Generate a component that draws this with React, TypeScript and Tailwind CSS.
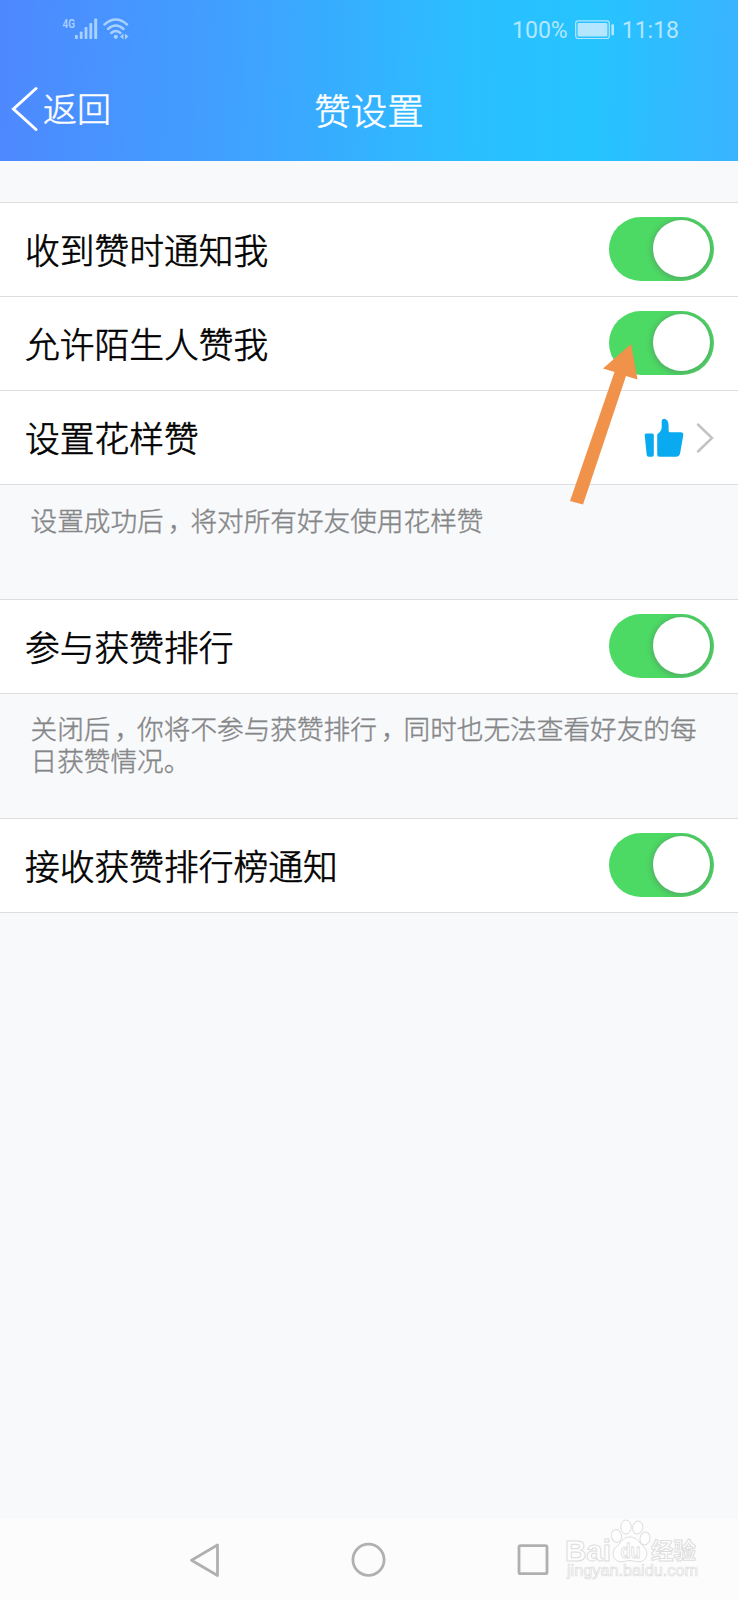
import type { ReactNode } from "react";

function StatusBar() {
  return (
    <div className="flex h-[60px] items-center justify-between pr-[59px] pl-[62px] text-[#b4e6ff]">
      <svg width="70" height="24" viewBox="0 0 70 24" className="mt-[-2px] text-[#a9d1ff]" fill="currentColor">
        <text x="0.5" y="10.5" fontSize="12.5" fontWeight="600" fontFamily="Roboto, sans-serif" textLength="12.5" lengthAdjust="spacingAndGlyphs">
          4G
        </text>
        <rect x="13" y="18" width="2.8" height="4" rx="0.8" />
        <rect x="17.8" y="14.5" width="2.8" height="7.5" rx="0.8" />
        <rect x="22.6" y="10" width="2.8" height="12" rx="0.8" />
        <rect x="27.4" y="6" width="2.8" height="16" rx="0.8" />
        <rect x="32.2" y="1.5" width="3" height="20.5" rx="0.8" />
        <g fill="none" stroke="currentColor" strokeWidth="2.4" strokeLinecap="round">
          <path d="M42.5 7.5Q53.8-2.3 65 7.5" />
          <path d="M46 12Q53.8 5.2 61.5 12" />
          <path d="M49.2 16Q53.8 11.8 58.4 16" />
        </g>
        <circle cx="53.8" cy="19.8" r="2.1" />
        <path d="M61.5 16.5v6l-3.5-3zM63 16.5v6l3.5-3z" />
      </svg>
      <div className="flex items-center font-[Roboto,sans-serif] text-[23px] leading-none">
        <span>100%</span>
        <svg width="40" height="20" viewBox="0 0 40 20" className="mr-[7px] ml-[7px]">
          <rect x="0.7" y="0.9" width="33.6" height="17.6" rx="2.5" fill="none" stroke="currentColor" strokeWidth="1.2" />
          <rect x="2.6" y="2.9" width="29.8" height="13.6" rx="1" fill="currentColor" />
          <rect x="36.4" y="4.2" width="2.6" height="11" rx="1" fill="currentColor" />
        </svg>
        <span>11:18</span>
      </div>
    </div>
  );
}

function Header() {
  return (
    <header className="h-[161px] bg-[linear-gradient(92deg,#4e88ff_0%,#3fa2ff_33%,#2abfff_64%,#25c4ff_80%,#3ab3ff_100%)]">
      <StatusBar />
      <div className="grid h-[100px] grid-cols-[1fr_auto_1fr] items-center px-[11px] text-white">
        <div className="flex items-center gap-[5px] text-[34px] leading-none font-light [-webkit-text-stroke:0.5px]">
          <svg width="27" height="46" viewBox="0 0 27 46" fill="none" stroke="currentColor" strokeWidth="3" strokeLinecap="round" className="mt-[-2px]">
            <path d="M25 2.5 2.5 23 25 43.5" />
          </svg>
          <span className="mt-[-4px]">返回</span>
        </div>
        <h1 className="text-[36.5px] leading-none font-light [-webkit-text-stroke:0.5px]">赞设置</h1>
      </div>
    </header>
  );
}

function Switch() {
  return (
    <span className="mt-[-2px] flex h-[64px] w-[105px] items-center justify-end overflow-hidden rounded-full bg-[#4cd964] pr-[4px]">
      <span className="size-[57px] rounded-full bg-white shadow-[0_1px_5px_2px_rgba(90,120,100,0.4)]" />
    </span>
  );
}

function Row({ label, children }: { label: string; children: ReactNode }) {
  return (
    <div className="flex h-[94px] items-center justify-between border-t border-[#dcdddf] bg-white pr-[24px] pl-[25px]">
      <span className="mt-[-1px] text-[34.75px] leading-none font-light text-black [-webkit-text-stroke:0.6px]">{label}</span>
      {children}
    </div>
  );
}

function Note({ children }: { children: ReactNode }) {
  return (
    <p className="pl-[30.5px] font-['Liberation_Sans','Noto_Sans_CJK_SC',sans-serif] text-[26.65px] leading-[32px] font-light whitespace-nowrap text-[#858688] [-webkit-text-stroke:0.4px]">
      {children}
    </p>
  );
}

function Comma() {
  return <span className="ml-[4px] tracking-[-4px]">，</span>;
}

function Thumb() {
  return (
    <svg width="40" height="40" viewBox="0 0 40 40" fill="#0aaaf0">
      <path d="M2 15.5h6.3q1.5 0 1.5 1.5v20q0 1.7-1.7 1.7H4.6q-1.7 0-1.9-1.7L.7 17q-.1-1.5 1.3-1.5Z" />
      <path d="M13.2 17q0-1 1.2-1.8 3.3-2.1 3.3-6.5V3.5Q17.7.7 20.4.7q4 .7 4.2 6.8v5.2q0 1.6 1.7 1.6h10.4q3 0 2.5 3.2l-3 17.2q-.7 4-4.2 4H15.5q-2.3 0-2.3-2.2Z" />
    </svg>
  );
}

function Watermark() {
  return (
    <svg
      width="140"
      height="70"
      viewBox="0 0 140 70"
      className="absolute top-[-2px] left-[562px]"
      fill="#fefefe"
      stroke="#dedede"
      strokeWidth="1"
      fontFamily="'Liberation Sans', sans-serif"
    >
      <text x="3" y="44" fontSize="29" fontWeight="700" textLength="46" lengthAdjust="spacingAndGlyphs">
        Bai
      </text>
      <ellipse cx="54.5" cy="19" rx="5" ry="6.5" transform="rotate(-12 54.5 19)" />
      <ellipse cx="64" cy="10" rx="5.2" ry="7" />
      <ellipse cx="75.7" cy="10.5" rx="5" ry="6.5" transform="rotate(12 75.7 10.5)" />
      <ellipse cx="83" cy="21.5" rx="5" ry="6.5" transform="rotate(12 83 21.5)" />
      <path d="M68 20c7 0 9 6 14 10 5 5 3 13-3 14.5-4 1-7-1-11-1s-7 2-11 1c-6-1.5-8-9.5-3-14.5 5-4 7-10 14-10Z" />
      <text x="58.5" y="41" fontSize="21" fontWeight="700" textLength="20" lengthAdjust="spacingAndGlyphs">
        du
      </text>
      <text x="89" y="41.5" fontSize="22.5" fontWeight="700" fontFamily="'Liberation Sans', 'Noto Sans CJK SC', sans-serif">
        经验
      </text>
      <text x="5" y="59" fontSize="16" strokeWidth="0.7" textLength="131" lengthAdjust="spacingAndGlyphs">
        jingyan.baidu.com
      </text>
    </svg>
  );
}

function NavBar() {
  return (
    <nav className="relative mt-auto flex h-[81px] items-center justify-between bg-[#fcfcfc] px-[189px]">
      <svg width="32" height="36" viewBox="0 0 32 36" fill="none" stroke="#b0b0b0" strokeWidth="2.8" strokeLinejoin="round">
        <path d="M28.5 3v30.5L2.5 18.25Z" />
      </svg>
      <svg width="36" height="36" viewBox="0 0 36 36" fill="none" stroke="#b0b0b0" strokeWidth="2.8">
        <circle cx="17.5" cy="17.8" r="15.6" />
      </svg>
      <svg width="32" height="32" viewBox="0 0 32 32" fill="none" stroke="#b0b0b0" strokeWidth="2.8">
        <rect x="2" y="1.7" width="28" height="28" rx="1.5" />
      </svg>
      <Watermark />
    </nav>
  );
}

export default function App() {
  return (
    <div
      lang="zh-CN"
      className="relative flex h-[1600px] w-[738px] flex-col overflow-hidden bg-[#f8f9fb] font-['Noto_Sans_CJK_SC',sans-serif]"
    >
      <Header />

      <section className="mt-[41px] border-b border-[#dcdddf]">
        <Row label="收到赞时通知我">
          <Switch />
        </Row>
        <Row label="允许陌生人赞我">
          <Switch />
        </Row>
        <Row label="设置花样赞">
          <div className="flex items-center gap-[12px]">
            <Thumb />
            <svg width="18" height="32" viewBox="0 0 18 32" fill="none" stroke="#c3c3c5" strokeWidth="2.5" strokeLinecap="round">
              <path d="M2 2.5l14 13.5L2 29.5" />
            </svg>
          </div>
        </Row>
      </section>
      <div className="h-[114px] pt-[21px]">
        <Note>
          设置成功后
          <Comma />
          将对所有好友使用花样赞
        </Note>
      </div>

      <section className="border-b border-[#dcdddf]">
        <Row label="参与获赞排行">
          <Switch />
        </Row>
      </section>
      <div className="h-[124px] pt-[20px]">
        <Note>
          关闭后
          <Comma />
          你将不参与获赞排行
          <Comma />
          同时也无法查看好友的每
          <br />
          日获赞情况。
        </Note>
      </div>

      <section className="border-b border-[#dcdddf]">
        <Row label="接收获赞排行榜通知">
          <Switch />
        </Row>
      </section>

      <NavBar />

      {/* pointer over the stranger-likes switch */}
      <svg width="80" height="170" viewBox="0 0 80 170" className="absolute top-[340px] left-[565px]" fill="#f1924a">
        <path d="M66 4 38 28.5 49.5 32 5 161 18 164.5 61 36 72.5 39.5Z" />
      </svg>
    </div>
  );
}
